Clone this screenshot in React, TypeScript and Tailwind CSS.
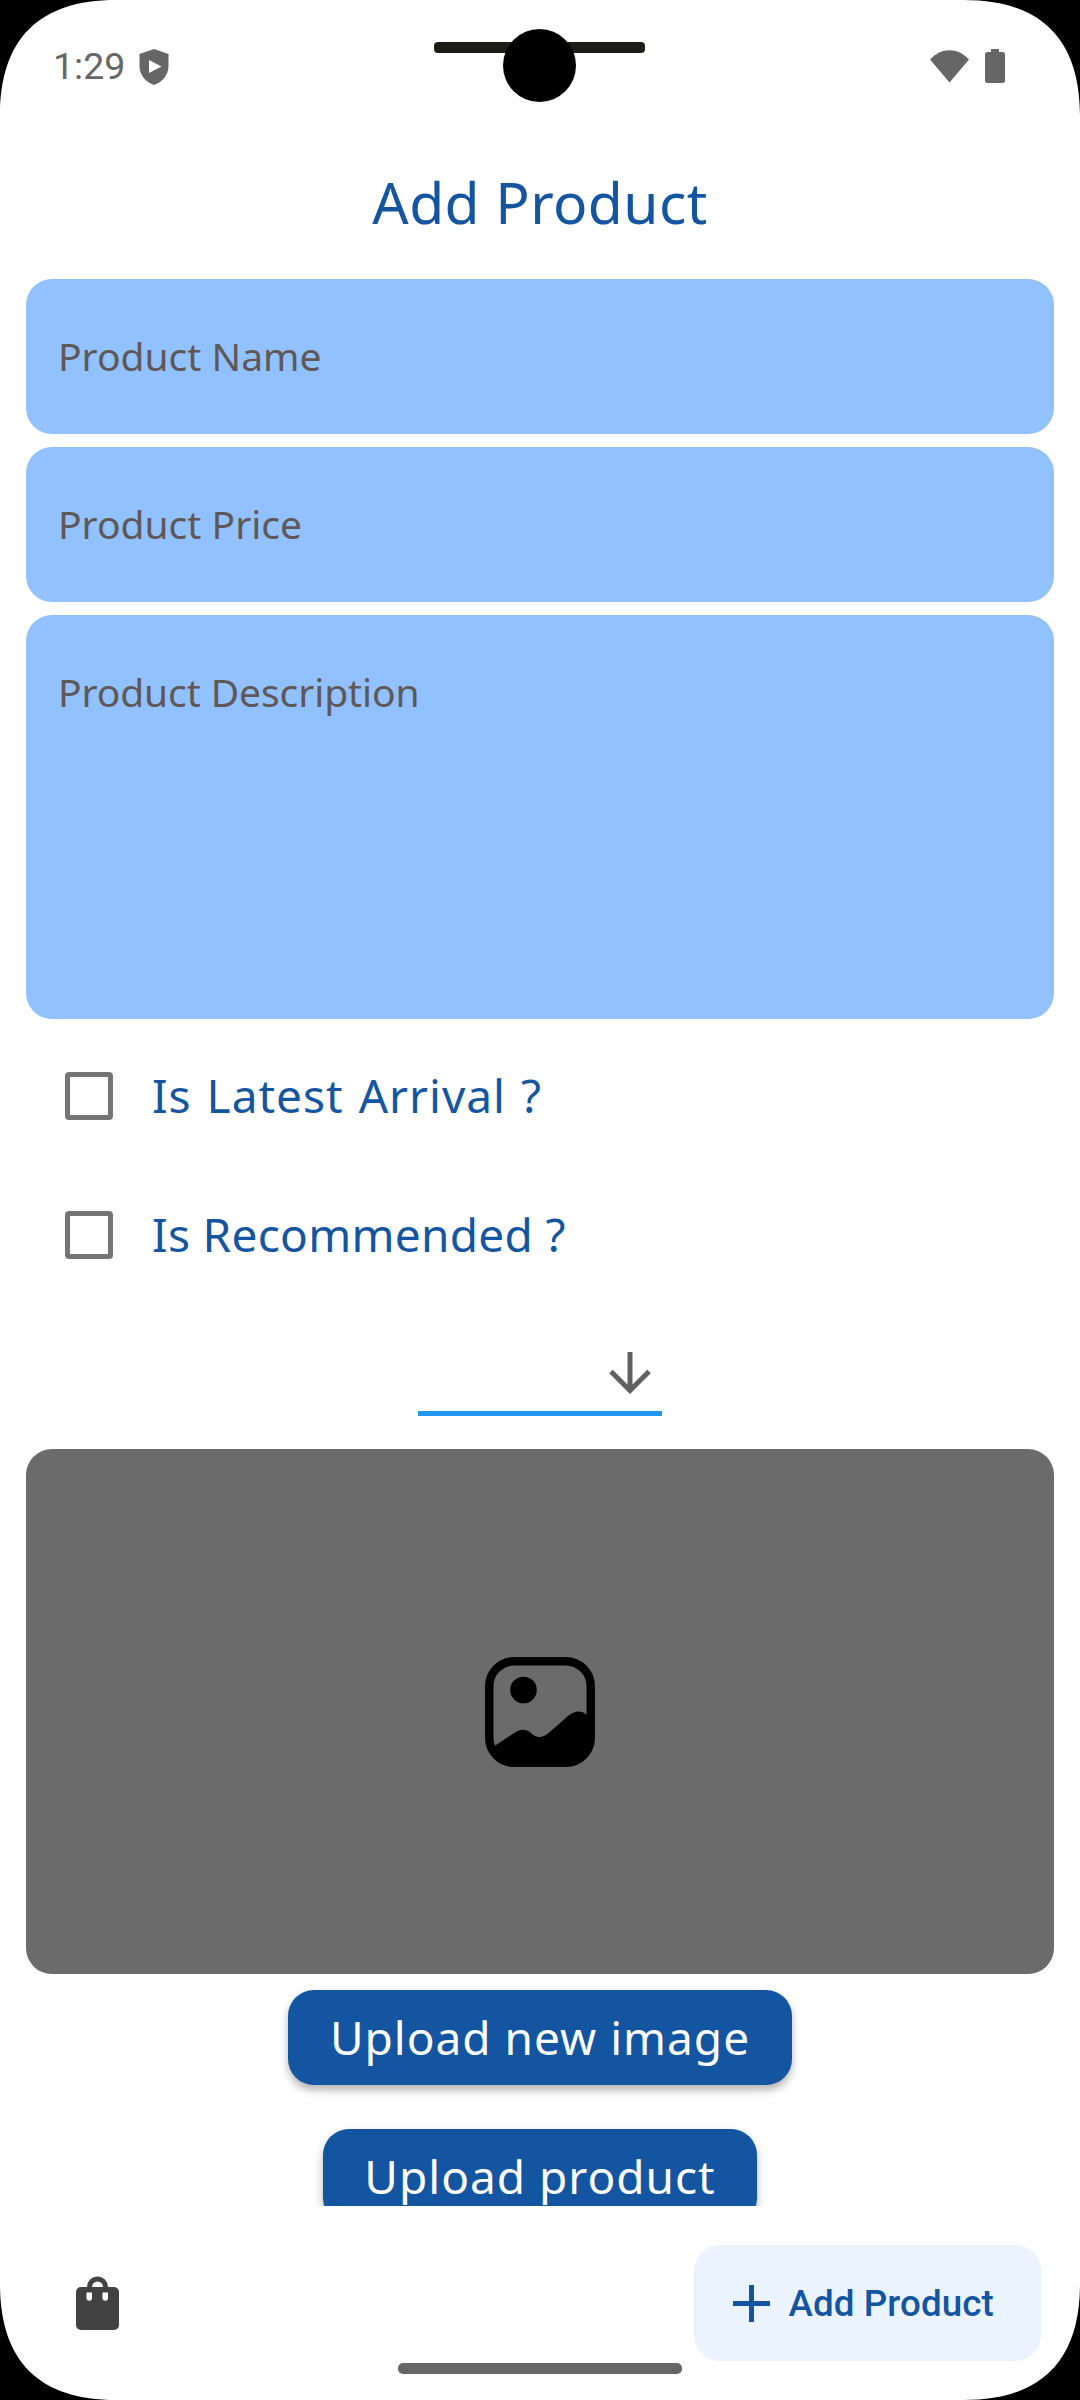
import React from "react";

const FONT = "font-['Noto_Sans',sans-serif]";

function Corner({ className }: { className: string }) {
  return (
    <svg className={`absolute ${className}`} width="116" height="116" viewBox="0 0 116 116" aria-hidden="true">
      <path d="M0 0H116C39 0 0 39 0 116Z" fill="#000" />
    </svg>
  );
}

function StatusBar() {
  return (
    <header className="relative flex h-[132px] shrink-0 items-center justify-between pl-[53px] pr-[75px] text-[#666]">
      <div className="flex items-center">
        <span className="w-[86px] font-[Roboto,sans-serif] text-[37.500px] leading-[44px]">1:29</span>
        <svg width="30" height="36" viewBox="0 0 30 36" aria-hidden="true" className="mt-[2px]">
          <path d="M15 0 29.5 5V17C29.5 26 23 33.500 15 36 7 33.500.5 26 .5 17V5Z" fill="currentColor" />
          <path d="M10 11V24L22.500 17.500Z" fill="#fff" />
        </svg>
      </div>
      <div className="flex items-center gap-4">
        <svg width="39" height="33" viewBox="0 0 39 33" aria-hidden="true">
          <path d="M0 9.500C11-3 28-3 39 9.500L19.500 32.500Z" fill="currentColor" />
        </svg>
        <svg width="20" height="34" viewBox="0 0 20 34" aria-hidden="true">
          <path d="M6 0H14V3H17.500A2.500 2.500 0 0 1 20 5.500V31.500A2.500 2.500 0 0 1 17.500 34H2.500A2.500 2.500 0 0 1 0 31.500V5.500A2.500 2.500 0 0 1 2.500 3H6Z" fill="currentColor" />
        </svg>
      </div>
      <div className="absolute left-[434px] top-[42px] h-[11px] w-[211px] rounded-[4px] bg-[#1d1d17]" />
      <div className="absolute left-[503px] top-[29px] size-[73px] rounded-full bg-black" />
    </header>
  );
}

function Field({ label }: { label: string }) {
  return (
    <div className="flex h-[155px] shrink-0 items-center rounded-[26px] bg-[#92c1ff] px-8 text-[39px] text-[#5f5858]">
      {label}
    </div>
  );
}

function CheckRow({ children }: { children: React.ReactNode }) {
  return (
    <div className="flex h-[139px] shrink-0 items-center pl-[39px] text-[#1455a1]">
      <span className="size-[48px] rounded-[4px] border-[5px] border-[#757575]" />
      {children}
    </div>
  );
}

export default function App() {
  return (
    <div className={`relative flex h-[2400px] w-[1080px] flex-col overflow-hidden bg-white ${FONT}`}>
      <StatusBar />
      <main className="flex h-[2074px] shrink-0 flex-col overflow-hidden px-[26px]">
        <h1 className="h-[147px] shrink-0 pt-[31px] text-center text-[57px] leading-[78px] tracking-[0.4px] text-[#1455a1]">Add Product</h1>
        <div className="flex shrink-0 flex-col gap-[13px]">
          <Field label="Product Name" />
          <Field label="Product Price" />
          <div className="h-[404px] rounded-[26px] bg-[#92c1ff] px-8 pt-[50px] text-[39px] leading-[54px] tracking-[-0.1px] text-[#5f5858]">
            Product Description
          </div>
        </div>
        <div className="flex shrink-0 flex-col pt-[7px]">
          <CheckRow><span className="pl-[39px] text-[46px] tracking-[1px] [word-spacing:2px]">Is Latest Arrival ?</span></CheckRow>
          <CheckRow><span className="pl-[39px] text-[46px] tracking-[0.3px]">Is Recommended ?</span></CheckRow>
        </div>
        <div className="mx-auto mt-[31px] flex h-[80.500px] w-[244px] shrink-0 justify-end border-b-[5px] border-[#2196f3] pr-[11px] pt-[17px]">
          <svg width="42" height="42" viewBox="0 0 42 42" fill="none" stroke="#616161" strokeWidth="5" aria-hidden="true">
            <path d="M21 0V38M2 19.500 21 38.500 40 19.500" />
          </svg>
        </div>
        <div className="mt-[33.500px] flex h-[525px] shrink-0 items-center justify-center rounded-[26px] bg-[#6b6b6b]">
          <svg width="110" height="110" viewBox="0 0 110 110" aria-hidden="true">
            <rect x="4.250" y="4.250" width="101.500" height="101.500" rx="25" fill="none" stroke="#000" strokeWidth="8.500" />
            <circle cx="38.500" cy="33" r="13.300" />
            <path d="M8 90 30 75.500C36 71.500 42 72 47 77 52 81.500 58 80.500 63 76.500L83 59C89 54 96 52.500 102 58L109 62V80C109 97 97 109 80 109H30C19 109 10 103 8 90Z" />
          </svg>
        </div>
        <div className="mt-[16px] flex shrink-0 flex-col items-center gap-11 text-[46px] tracking-[1px] text-white">
          <button className="flex h-[95px] w-[504px] items-center justify-center whitespace-nowrap rounded-[26px] bg-[#1455a1] shadow-[0_5px_8px_rgba(0,0,0,0.3)]">
            Upload new image
          </button>
          <button className="flex h-[95px] w-[434px] items-center justify-center whitespace-nowrap rounded-[26px] bg-[#1455a1] shadow-[0_5px_8px_rgba(0,0,0,0.3)]">
            Upload product
          </button>
        </div>
      </main>
      <nav className="flex h-[194px] shrink-0 items-start justify-between pl-[76px] pr-[39.500px] pt-[39px]">
        <svg width="43" height="54" viewBox="0 0 43 54" className="mt-[31px]" aria-hidden="true">
          <rect y="11" width="43" height="43" rx="5" fill="#424242" />
          <path d="M13.500 13V11A8 8 0 0 1 29.500 11V13" fill="none" stroke="#424242" strokeWidth="5" />
          <path d="M10.500 16.500H16V22A2.750 2.750 0 0 1 10.500 22ZM26.500 16.500H32V22A2.750 2.750 0 0 1 26.500 22Z" fill="#fff" />
        </svg>
        <button className="flex h-[116px] w-[346.500px] items-center rounded-[26px] bg-[#eaf3ff] pl-[39px] text-[#1455a1]">
          <svg width="37" height="37" viewBox="0 0 37 37" stroke="currentColor" strokeWidth="5" aria-hidden="true">
            <path d="M18.500 0V37M0 18.500H37" />
          </svg>
          <span className="whitespace-nowrap pl-[18.500px] pt-px font-[Roboto,sans-serif] text-[36.750px] font-medium tracking-[0.1px]">Add Product</span>
        </button>
      </nav>
      <div className="absolute left-[398px] top-[2363px] h-[11px] w-[284px] rounded-[5px] bg-[#666]" />
      <Corner className="left-0 top-0" />
      <Corner className="right-0 top-0 rotate-90" />
      <Corner className="bottom-0 right-0 rotate-180" />
      <Corner className="bottom-0 left-0 -rotate-90" />
    </div>
  );
}
